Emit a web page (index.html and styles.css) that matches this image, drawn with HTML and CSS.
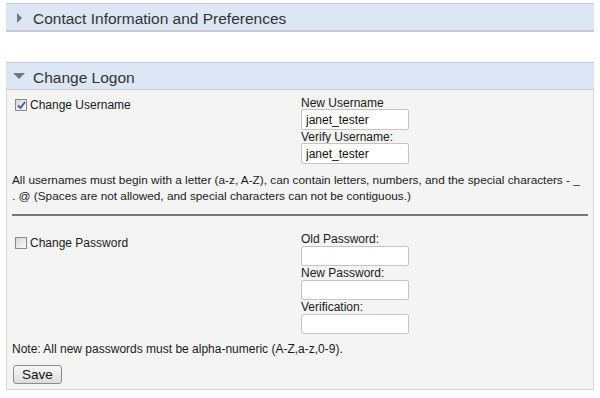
FILE: index.html
```html
<!DOCTYPE html>
<html lang="en">
<head>
    <meta charset="UTF-8">
    <title>Account Settings</title>
    <link rel="stylesheet" href="styles.css">
</head>
<body>
    <!-- Collapsed section -->
    <div class="section-header collapsed">
        <span class="arrow arrow-right"></span>
        Contact Information and Preferences
    </div>

    <!-- Expanded section -->
    <div class="section-header expanded">
        <span class="arrow arrow-down"></span>
        Change Logon
    </div>
    <div class="panel">
        <!-- Username -->
        <div class="field-row username-row">
            <label class="check">
                <span class="box">
                    <svg width="9" height="9" viewBox="0 0 9 9"><path d="M1 4.5 L3.5 7 L8 1" fill="none" stroke="#3a55a8" stroke-width="1.8"/></svg>
                </span>
                Change Username
            </label>
            <div class="fields">
                <label class="field-label">New Username</label>
                <input class="text-input" type="text" value="janet_tester">
                <label class="field-label">Verify Username:</label>
                <input class="text-input" type="text" value="janet_tester">
            </div>
        </div>
        <p class="hint">All usernames must begin with a letter (a-z, A-Z), can contain letters, numbers, and the special characters - _<br>. @ (Spaces are not allowed, and special characters can not be contiguous.)</p>

        <hr class="divider">

        <!-- Password -->
        <div class="field-row password-row">
            <label class="check">
                <span class="box"></span>
                Change Password
            </label>
            <div class="fields">
                <label class="field-label">Old Password:</label>
                <input class="text-input" type="password">
                <label class="field-label">New Password:</label>
                <input class="text-input" type="password">
                <label class="field-label">Verification:</label>
                <input class="text-input" type="password">
            </div>
        </div>
        <p class="note">Note: All new passwords must be alpha-numeric (A-Z,a-z,0-9).</p>

        <button class="save-btn">Save</button>
    </div>
</body>
</html>
```
FILE: styles.css
```css
* {
    margin: 0;
    padding: 0;
    box-sizing: border-box;
}

body {
    font-family: "Liberation Sans", Arial, sans-serif;
    font-size: 12px;
    color: #1a1a1a;
    background-color: #fff;
    padding: 3px 6px;
    width: 600px;
}

/* Section headers */
.section-header {
    display: flex;
    align-items: center;
    height: 29px;
    padding-left: 27px;
    padding-top: 3px;
    position: relative;
    background-color: #dce6f4;
    border-top: 1px solid #b9cbe8;
    border-bottom: 2px solid #c9c9c9;
    font-size: 15.5px;
    color: #333;
}

.section-header.expanded {
    margin-top: 30px;
    height: 28px;
    border-bottom: 1px solid #d0d0d0;
}

.arrow {
    position: absolute;
    width: 0;
    height: 0;
}

.arrow-right {
    left: 11px;
    top: 9px;
    border-top: 5px solid transparent;
    border-bottom: 5px solid transparent;
    border-left: 5px solid #777;
}

.arrow-down {
    left: 7px;
    top: 10px;
    border-left: 6px solid transparent;
    border-right: 6px solid transparent;
    border-top: 6px solid #777;
}

/* Panel */
.panel {
    background-color: #f4f4f4;
    border: 1px solid #d6d6d6;
    border-top: none;
    padding: 6px 5px 5px 5px;
}

.field-row {
    display: flex;
}

.check {
    display: flex;
    align-items: flex-start;
    width: 289px;
    padding-left: 3px;
    padding-top: 2px;
    line-height: 15px;
}

.box {
    display: flex;
    align-items: center;
    justify-content: center;
    width: 12px;
    height: 12px;
    margin-top: 1px;
    margin-right: 3px;
    border: 1px solid #8a8a8a;
    background: linear-gradient(135deg, #d6d6d6, #fbfbfb);
}

.password-row .check {
    padding-top: 4px;
}

.fields {
    display: flex;
    flex-direction: column;
    align-items: flex-start;
}

.field-label {
    line-height: 14px;
    height: 13px;
}

.text-input {
    width: 108px;
    height: 21px;
    padding: 0 4px;
    border: 1px solid #c4c4c4;
    border-radius: 2px;
    background-color: #fff;
    font-family: "Liberation Sans", Arial, sans-serif;
    font-size: 12px;
    color: #111;
}

.password-row .text-input {
    height: 20px;
}

.password-row .field-label {
    height: 14px;
}

.hint {
    margin-top: 8px;
    font-size: 11.8px;
    line-height: 16px;
    white-space: nowrap;
}

.divider {
    border: none;
    border-top: 2px solid #777;
    margin: 10px 0 16px 0;
}

.note {
    margin-top: 7px;
    line-height: 16px;
}

.save-btn {
    margin-top: 8px;
    margin-left: 1px;
    width: 49px;
    height: 19px;
    border: 1px solid #8c8c8c;
    border-radius: 3px;
    background: linear-gradient(#f8f8f8, #dcdcdc);
    font-family: "Liberation Sans", Arial, sans-serif;
    font-size: 13.5px;
    color: #111;
}
```
